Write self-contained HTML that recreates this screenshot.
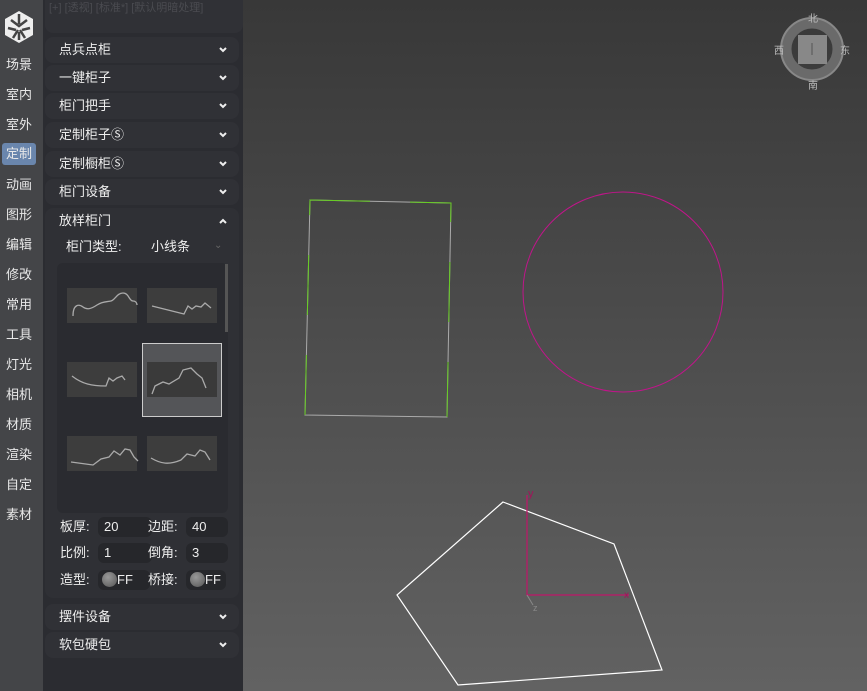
<!DOCTYPE html><html><head><meta charset="utf-8"><style>
body{margin:0;width:867px;height:691px;overflow:hidden;font-family:"Liberation Sans","Noto Sans CJK SC",sans-serif;position:relative;background:#2b2c31}
.vp{position:absolute;left:243px;top:0;width:624px;height:691px;background:linear-gradient(#383838,#626262)}
.side{position:absolute;left:0;top:0;width:43px;height:691px;background:#444548}
.side div{position:absolute;left:0;width:38px;text-align:center;color:#e8e8e8;font-size:13px;line-height:20px}
.panel{position:absolute;left:43px;top:0;width:200px;height:691px;background:#2b2c31}
.row{position:absolute;left:45px;width:194px;height:26px;background:#303136;border-radius:8px;color:#eee;font-size:13px;line-height:26px}
.row span{position:absolute;left:14px}
.row svg{position:absolute;right:12px;top:10px}
.th{position:absolute;width:70px;height:35px;background:#3d3d3d}
.lbl{position:absolute;color:#eee;font-size:13px;line-height:18px}
.inp{position:absolute;height:20px;width:48px;background:#26272b;border-radius:6px;color:#eee;font-size:13px;line-height:20px;padding-left:6px}
.knob{display:inline-block;width:15px;height:15px;border-radius:50%;background:radial-gradient(circle at 40% 35%,#999,#555);vertical-align:-3px}
</style></head><body>
<div class="vp"></div>
<div class="side">
<svg style="position:absolute;left:3px;top:10px" width="32" height="34" viewBox="0 0 32 34"><polygon points="16,1 30,9 30,25 16,33 2,25 2,9" fill="#eee"/><path d="M16 4v10M8 10l8 6 8-6M5 18l8 2M27 18l-8 2M10 28l5-8M22 28l-5-8M16 22v8" stroke="#444" stroke-width="2.5" fill="none"/></svg>
<div style="top:55px">场景</div><div style="top:85px">室内</div><div style="top:115px">室外</div>
<div style="top:143px;left:2px;width:34px;height:22px;line-height:22px;background:#6a86ad;border-radius:3px">定制</div>
<div style="top:175px">动画</div><div style="top:205px">图形</div><div style="top:235px">编辑</div><div style="top:265px">修改</div><div style="top:295px">常用</div><div style="top:325px">工具</div><div style="top:355px">灯光</div><div style="top:385px">相机</div><div style="top:415px">材质</div><div style="top:445px">渲染</div><div style="top:475px">自定</div><div style="top:505px">素材</div>
</div>
<div class="panel"></div>
<div style="position:absolute;left:45px;top:0;width:194px;height:33px;background:#303136;border-radius:0 0 8px 8px;color:#4a4b50;font-size:11px;padding-left:4px;line-height:16px;white-space:nowrap;overflow:hidden">[+] [透视] [标准*] [默认明暗处理]</div>
<div class="row" style="top:37px"><span>点兵点柜</span><svg width="8" height="6"><path d="M1 1l3 3 3-3" stroke="#eee" stroke-width="2" fill="none"/></svg></div>
<div class="row" style="top:65px"><span>一键柜子</span><svg width="8" height="6"><path d="M1 1l3 3 3-3" stroke="#eee" stroke-width="2" fill="none"/></svg></div>
<div class="row" style="top:93px"><span>柜门把手</span><svg width="8" height="6"><path d="M1 1l3 3 3-3" stroke="#eee" stroke-width="2" fill="none"/></svg></div>
<div class="row" style="top:122px"><span>定制柜子Ⓢ</span><svg width="8" height="6"><path d="M1 1l3 3 3-3" stroke="#eee" stroke-width="2" fill="none"/></svg></div>
<div class="row" style="top:151px"><span>定制橱柜Ⓢ</span><svg width="8" height="6"><path d="M1 1l3 3 3-3" stroke="#eee" stroke-width="2" fill="none"/></svg></div>
<div class="row" style="top:179px"><span>柜门设备</span><svg width="8" height="6"><path d="M1 1l3 3 3-3" stroke="#eee" stroke-width="2" fill="none"/></svg></div>
<div class="row" style="top:208px;height:390px;background:#2f3035"><span>放样柜门</span><svg width="8" height="6"><path d="M1 5l3-3 3 3" stroke="#eee" stroke-width="2" fill="none"/></svg></div>
<div class="lbl" style="left:66px;top:238px">柜门类型:</div><div class="lbl" style="left:151px;top:238px">小线条</div><div class="lbl" style="left:214px;top:237px;color:#666;font-size:10px">⌄</div>
<div style="position:absolute;left:57px;top:263px;width:171px;height:250px;background:#2a2b30;border-radius:6px"></div>
<div style="position:absolute;left:225px;top:264px;width:3px;height:68px;background:#555"></div>
<div style="position:absolute;left:142px;top:343px;width:78px;height:72px;background:#545558;border:1px solid #ccc"></div>
<div class="th" style="left:67px;top:288px"></div><div class="th" style="left:147px;top:288px"></div>
<div class="th" style="left:67px;top:362px"></div><div class="th" style="left:147px;top:362px;background:#3a3a3a"></div>
<div class="th" style="left:67px;top:436px"></div><div class="th" style="left:147px;top:436px"></div>
<svg style="position:absolute;left:0;top:0" width="243" height="691" fill="none" stroke="#aaa" stroke-width="1.3">
<path d="M73 316c0-12 6-12 10-9s8 2 14-2 10-3 14-4 6-8 12-8 6 8 10 8 4 4 4 4"/>
<path d="M152 306l32 8 4-8 4 3 4-3 5 1 4-4 6 5"/>
<path d="M72 376c10 8 20 10 34 10l3-8 4 3 4-3 5-2 3 4"/>
<path d="M152 394l3-8 8-4 6 2 10-6 4-8 8-2 6 6 5 4 4 10"/>
<path d="M71 462l22 3 8-6 8-2 5-6 6 4 5-6 5 1 4 7 4 4"/>
<path d="M151 458c10 6 18 7 30 2l6-6 8 2 5-6 5 2 5 8"/>
</svg>
<div class="lbl" style="left:60px;top:518px">板厚:</div><div class="inp" style="left:98px;top:517px">20</div>
<div class="lbl" style="left:148px;top:518px">边距:</div><div class="inp" style="left:186px;top:517px;width:36px">40</div>
<div class="lbl" style="left:60px;top:544px">比例:</div><div class="inp" style="left:98px;top:543px">1</div>
<div class="lbl" style="left:148px;top:544px">倒角:</div><div class="inp" style="left:186px;top:543px;width:36px">3</div>
<div class="lbl" style="left:60px;top:571px">造型:</div><div class="inp" style="left:98px;top:570px;padding-left:4px"><span class="knob"></span>FF</div>
<div class="lbl" style="left:148px;top:571px">桥接:</div><div class="inp" style="left:186px;top:570px;width:36px;padding-left:4px"><span class="knob"></span>FF</div>
<div class="row" style="top:604px"><span>摆件设备</span><svg width="8" height="6"><path d="M1 1l3 3 3-3" stroke="#eee" stroke-width="2" fill="none"/></svg></div>
<div class="row" style="top:632px"><span>软包硬包</span><svg width="8" height="6"><path d="M1 1l3 3 3-3" stroke="#eee" stroke-width="2" fill="none"/></svg></div>
<svg style="position:absolute;left:0;top:0" width="867" height="691" fill="none">
<path d="M310 200l141 3-4 214-142-2z" stroke="#aaa"/>
<path d="M310 200l141 3-4 214M305 415l5-215" stroke="#6c2" stroke-dasharray="60 40"/>
<circle cx="623" cy="292" r="100" stroke="#c0158a"/>
<path d="M503 502l111 42 48 126-204 15-61-90z" stroke="#fff" stroke-width="1.2"/>
<path d="M527 495v100h102" stroke="#c0156a" stroke-width="1.2"/>
<path d="M527 595l6 10" stroke="#888"/>
<text x="528" y="497" fill="#a0155a" font-size="11">y</text><text x="624" y="598" fill="#a0155a" font-size="10">x</text><text x="533" y="611" fill="#888" font-size="9">z</text>
<circle cx="812" cy="49" r="26" stroke="#6a6a6a" stroke-width="11"/><circle cx="812" cy="49" r="31" stroke="#888" stroke-width="2"/>
<rect x="798" y="35" width="29" height="29" fill="#888"/><path d="M812 43v12" stroke="#555"/>
<text x="808" y="22" fill="#bbb" font-size="10">北</text><text x="808" y="89" fill="#bbb" font-size="10">南</text><text x="774" y="54" fill="#bbb" font-size="10">西</text><text x="840" y="54" fill="#bbb" font-size="10">东</text>
</svg>
</body></html>
